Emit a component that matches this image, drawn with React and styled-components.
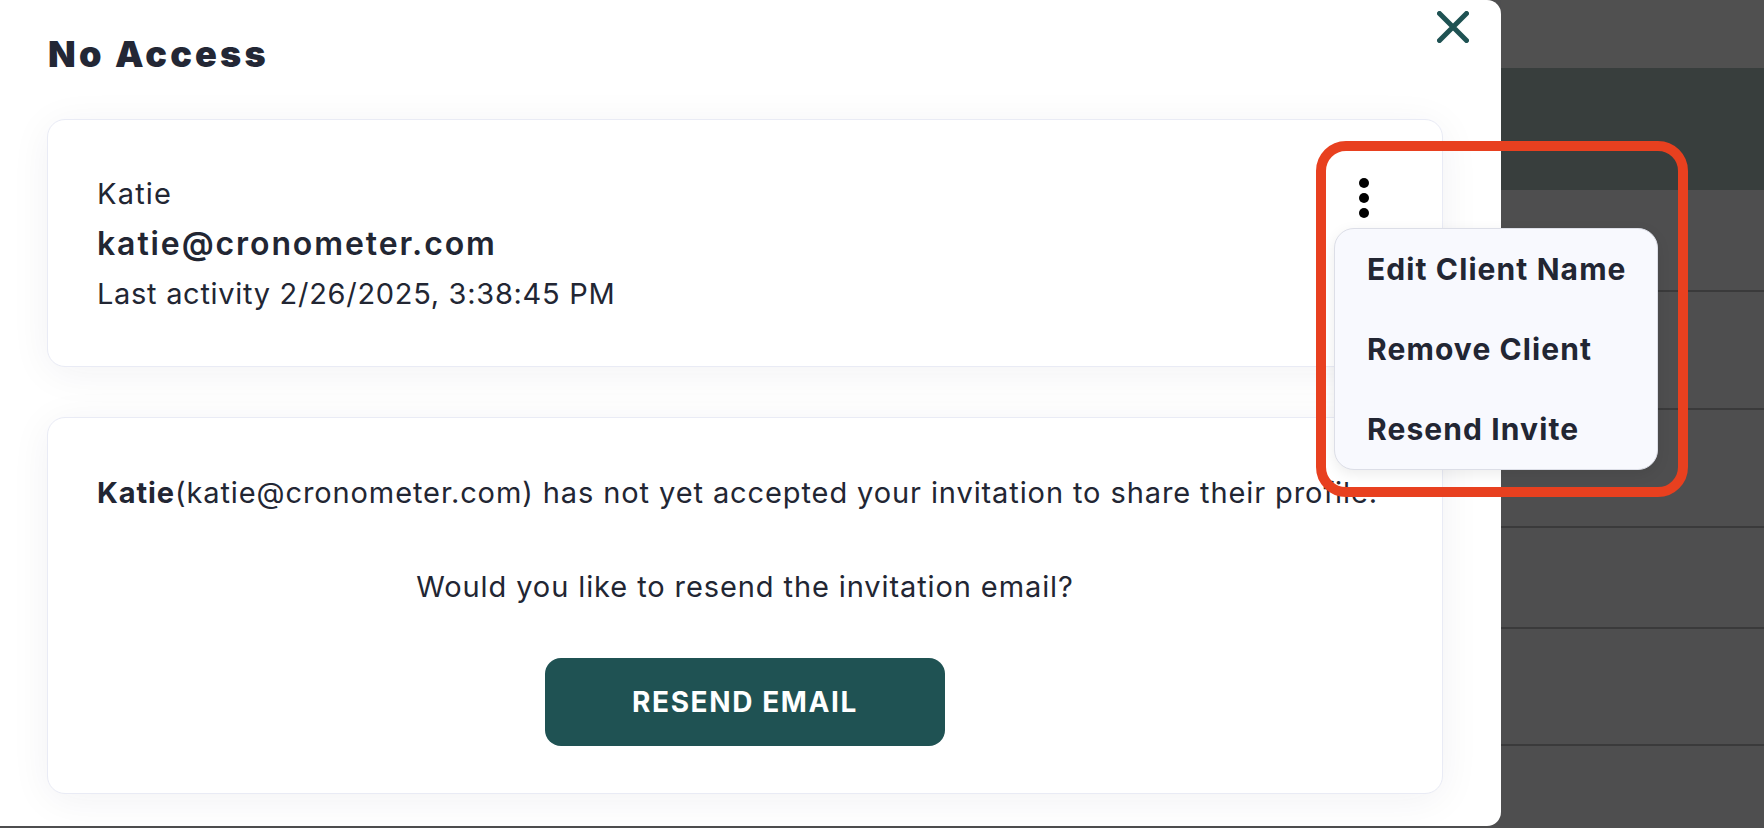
import React from "react";
import styled, { createGlobalStyle } from "styled-components";

const Global = createGlobalStyle`
  html, body { margin: 0; padding: 0; }
  body {
    background: #4e4e4f;
    overflow: hidden;
    font-family: Inter, "Noto Sans", "Liberation Sans", sans-serif;
    color: #222633;
  }
  * { box-sizing: border-box; }
`;

const Page = styled.div`
  position: relative;
  width: 1764px;
  height: 828px;
  display: flex;
  align-items: flex-start;
`;

const Modal = styled.section`
  width: 1501px;
  height: 826px;
  flex: none;
  background: #ffffff;
  border-radius: 0 14px 14px 0;
  padding: 11px 58px 0 47px;
  display: flex;
  flex-direction: column;
`;

const Header = styled.header`
  display: flex;
  justify-content: space-between;
  align-items: flex-start;
  margin-right: -26px;
  margin-left: 1px;
`;

const Title = styled.h1`
  margin: 21px 0 0;
  font-family: Inter, "Liberation Sans", sans-serif;
  font-weight: 900;
  font-size: 36px;
  line-height: 44px;
  letter-spacing: 3.2px;
  color: #232735;
`;

const CloseButton = styled.button`
  width: 32px;
  height: 32px;
  padding: 0;
  border: none;
  background: transparent;
  display: flex;
  cursor: pointer;
`;

const Card = styled.div`
  background: #ffffff;
  border: 1px solid #e9ebf5;
  border-radius: 18px;
  box-shadow: 0 6px 40px rgba(30, 30, 70, 0.06);
  margin-top: ${(p) => p.$mt}px;
`;

const ClientCard = styled(Card)`
  display: flex;
  justify-content: space-between;
  align-items: flex-start;
  padding: 49px 73px 47px 49px;
`;

const Info = styled.div`
  display: flex;
  flex-direction: column;
`;

const Line = styled.div`
  font-size: ${(p) => p.$size || 29}px;
  font-weight: ${(p) => p.$weight || 400};
  letter-spacing: ${(p) => p.$ls ?? 0.9}px;
  line-height: 50px;
  white-space: nowrap;
`;

const KebabWrap = styled.div`
  position: relative;
  margin-top: 9px;
  width: 10px;
  height: 40px;
`;

const Kebab = styled.button`
  width: 10px;
  height: 40px;
  padding: 0;
  border: none;
  background: transparent;
  display: block;
`;

const Menu = styled.ul`
  position: absolute;
  top: 50px;
  left: -25px;
  width: 324px;
  margin: 0;
  padding: 0;
  list-style: none;
  background: #f8f9fe;
  border: 1.5px solid #dcdee7;
  border-radius: 20px;
  box-shadow: 0 4px 14px rgba(0, 0, 0, 0.08);
  z-index: 5;
`;

const MenuItem = styled.li`
  height: 80px;
  line-height: 80px;
  padding-left: 32px;
  font-size: 30px;
  font-weight: 700;
  letter-spacing: 1.1px;
  color: #222633;
  white-space: nowrap;
`;

const InviteCard = styled(Card)`
  padding: 50px 49px 47px 49px;
  display: flex;
  flex-direction: column;
  align-items: center;
`;

const Message = styled.p`
  margin: ${(p) => p.$mt || 0}px 0 0;
  align-self: ${(p) => (p.$left ? "flex-start" : "center")};
  font-size: 29px;
  letter-spacing: 0.9px;
  line-height: 50px;
  white-space: nowrap;
  strong { font-weight: 700; }
`;

const PrimaryButton = styled.button`
  margin-top: 46px;
  width: 400px;
  height: 88px;
  border: none;
  border-radius: 16px;
  background: #1f5253;
  color: #ffffff;
  font-family: Inter, "Liberation Sans", sans-serif;
  font-size: 28px;
  font-weight: 700;
  letter-spacing: 1.6px;
  text-transform: uppercase;
  cursor: pointer;
`;

const Backdrop = styled.div`
  flex: 1;
  height: 828px;
  display: flex;
  flex-direction: column;
`;

const Band = styled.div`
  height: ${(p) => p.$h}px;
  flex: none;
  background: ${(p) => p.$bg || "#4e4e4f"};
  border-top: ${(p) => (p.$line ? "2px solid #3a3a3b" : "none")};
`;

const Highlight = styled.div`
  position: absolute;
  left: 1316px;
  top: 141px;
  width: 372px;
  height: 356px;
  border: 10px solid #e8401f;
  border-radius: 30px;
  pointer-events: none;
  z-index: 10;
`;

export default function App() {
  return (
    <>
      <Global />
      <Page>
        <Modal>
          <Header>
            <Title>No Access</Title>
            <CloseButton aria-label="Close">
              <svg width="32" height="32" viewBox="0 0 32 32">
                <path
                  d="M2.5 2.5 L29.5 29.5 M29.5 2.5 L2.5 29.5"
                  stroke="#1f5253"
                  strokeWidth="5"
                  strokeLinecap="round"
                  fill="none"
                />
              </svg>
            </CloseButton>
          </Header>

          <ClientCard $mt={43}>
            <Info>
              <Line $ls={1.2}>Katie</Line>
              <Line $size={32} $weight={600} $ls={1.9}>katie@cronometer.com</Line>
              <Line $ls={0.7}>Last activity 2/26/2025, 3:38:45 PM</Line>
            </Info>
            <KebabWrap>
              <Kebab aria-label="More">
                <svg width="10" height="40" viewBox="0 0 10 40">
                  <circle cx="5" cy="5" r="5" fill="#000" />
                  <circle cx="5" cy="20" r="5" fill="#000" />
                  <circle cx="5" cy="35" r="5" fill="#000" />
                </svg>
              </Kebab>
              <Menu>
                <MenuItem>Edit Client Name</MenuItem>
                <MenuItem>Remove Client</MenuItem>
                <MenuItem>Resend Invite</MenuItem>
              </Menu>
            </KebabWrap>
          </ClientCard>

          <InviteCard $mt={50}>
            <Message $left>
              <strong>Katie</strong>(katie@cronometer.com) has not yet accepted your invitation to share their profile.
            </Message>
            <Message $mt={44}>Would you like to resend the invitation email?</Message>
            <PrimaryButton>Resend Email</PrimaryButton>
          </InviteCard>
        </Modal>

        <Backdrop>
          <Band $h={68} $bg="#505050" />
          <Band $h={122} $bg="#383e3d" />
          <Band $h={100} />
          <Band $h={118} $line />
          <Band $h={118} $line />
          <Band $h={101} $line />
          <Band $h={117} $line />
          <Band $h={84} $line />
        </Backdrop>

        <Highlight />
      </Page>
    </>
  );
}
